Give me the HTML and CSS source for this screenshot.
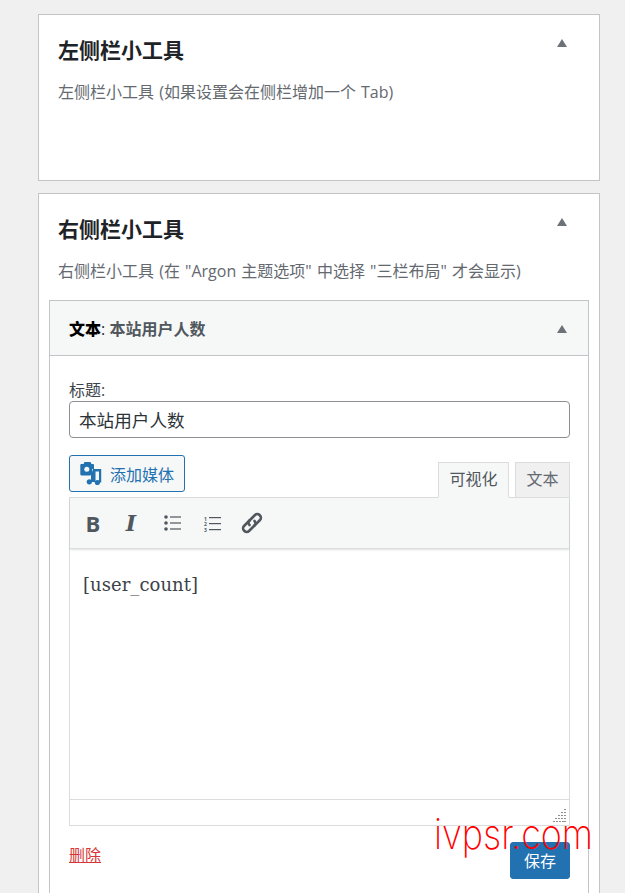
FILE: index.html
```html
<!DOCTYPE html>
<html lang="zh-CN">
<head>
<meta charset="utf-8">
<title>小工具</title>
<link rel="stylesheet" href="styles.css">
</head>
<body>
<main class="page">
  <section class="card card-left">
    <div class="card-head">
      <h2>左侧栏小工具</h2>
      <span class="arrow"></span>
    </div>
    <p class="desc">左侧栏小工具 (如果设置会在侧栏增加一个 Tab)</p>
  </section>

  <section class="card card-right">
    <div class="card-head">
      <h2>右侧栏小工具</h2>
      <span class="arrow"></span>
    </div>
    <p class="desc">右侧栏小工具 (在 "Argon 主题选项" 中选择 "三栏布局" 才会显示)</p>

    <div class="widget">
      <div class="widget-head">
        <h3><b>文本</b><i>:</i> <span>本站用户人数</span></h3>
        <span class="arrow arrow-widget"></span>
      </div>
      <div class="widget-body">
        <label class="field-label" for="t">标题:</label>
        <input class="field-input" id="t" type="text" value="本站用户人数">

        <div class="editor-top">
          <button class="media-btn" type="button">
            <svg class="media-icon" viewBox="0 0 22 23" width="22" height="23" aria-hidden="true">
              <path fill="#2271b1" d="M3.500 2L4.500 0h6l1 2h1.300c.7 0 1.200.5 1.200 1.200V7h-2v5.500L10 13.500H1.500C.8 13.500.3 13 .3 12.300V3.200C.3 2.500.8 2 1.500 2z"/>
              <circle cx="6.800" cy="7.300" r="2.500" fill="#f6f7f7"/>
              <path fill="#2271b1" d="M13 7h8.200V20.500h-2.200V9.500h-3.500V20H11V13z"/>
              <circle cx="9.300" cy="19.800" r="2.600" fill="#2271b1"/>
              <circle cx="17.400" cy="20.500" r="2.600" fill="#2271b1"/>
            </svg>
            <span>添加媒体</span>
          </button>
          <div class="tabs">
            <span class="tab tab-active">可视化</span>
            <span class="tab tab-text">文本</span>
          </div>
        </div>

        <div class="editor">
          <div class="toolbar">
            <span class="tool tool-b">B</span>
            <span class="tool tool-i">I</span>
            <svg viewBox="0 0 17 16" width="17" height="16" aria-hidden="true">
              <g fill="#50575e">
                <circle cx="2" cy="2" r="1.800"/><circle cx="2" cy="8" r="1.800"/><circle cx="2" cy="14" r="1.800"/>
                <rect x="6" y="1.400" width="11" height="1.200"/><rect x="6" y="7.400" width="11" height="1.200"/><rect x="6" y="13.400" width="11" height="1.200"/>
              </g>
            </svg>
            <svg viewBox="0 0 17 17" width="17" height="17" aria-hidden="true">
              <g fill="#50575e">
                <text x="0" y="5.500" class="num">1</text><text x="0" y="11" class="num">2</text><text x="0" y="16.500" class="num">3</text>
                <rect x="5" y="2" width="12" height="1.200"/><rect x="5" y="8" width="12" height="1.200"/><rect x="5" y="14" width="12" height="1.200"/>
              </g>
            </svg>
            <svg viewBox="0 0 22 22" width="22" height="22" aria-hidden="true">
              <g fill="none" stroke="#50575e" stroke-width="2.600" stroke-linecap="round">
                <path d="M8.500 8.500L3 14a3.200 3.200 0 0 0 0 4.500l.5.500a3.200 3.200 0 0 0 4.500 0l5.500-5.500a3.200 3.200 0 0 0 0-4.500"/>
                <path d="M13.500 13.500L19 8a3.200 3.200 0 0 0 0-4.500l-.5-.5a3.200 3.200 0 0 0-4.500 0L8.500 8.500a3.200 3.200 0 0 0 0 4.500"/>
              </g>
            </svg>
          </div>
          <div class="editor-content">[user_count]</div>
          <div class="statusbar">
            <svg class="grip" viewBox="0 0 13 13" width="13" height="13" aria-hidden="true">
              <g fill="#8c8f94">
                <rect x="11" y="0" width="2" height="1"/>
                <rect x="8" y="3" width="2" height="1"/><rect x="11" y="3" width="2" height="1"/>
                <rect x="8" y="6" width="2" height="1"/><rect x="11" y="6" width="2" height="1"/><rect x="5" y="6" width="2" height="1"/>
                <rect x="2" y="9" width="2" height="1"/><rect x="5" y="9" width="2" height="1"/><rect x="8" y="9" width="2" height="1"/><rect x="11" y="9" width="2" height="1"/>
                <rect x="0" y="12" width="2" height="1"/><rect x="3" y="12" width="2" height="1"/><rect x="6" y="12" width="2" height="1"/><rect x="9" y="12" width="2" height="1"/><rect x="11" y="12" width="2" height="1"/>
              </g>
            </svg>
          </div>
        </div>

        <div class="actions">
          <a class="delete" href="#">删除</a>
          <button class="save" type="button">保存</button>
        </div>
      </div>
    </div>
  </section>
</main>
<div class="watermark">ivpsr.com</div>
</body>
</html>
```
FILE: styles.css
```css
* { box-sizing: border-box; }
html, body { margin: 0; height: 893px; overflow: hidden; }
body {
  background: #f0f0f1;
  font-family: "Open Sans", "Noto Sans CJK SC", sans-serif;
  color: #50575e;
  position: relative;
}
.page { padding: 14px 25px 0 38px; display: flex; flex-direction: column; gap: 12px; }
.card { background: #fff; border: 1px solid #c3c4c7; padding: 0 10px; }
.card-left { height: 167px; }
.card-right { height: 800px; }
.card-head { display: flex; justify-content: space-between; align-items: center; height: 70px; padding: 0 22px 0 9px; }
h2 { margin: 0; font-size: 21px; font-weight: 700; color: #1d2327; line-height: 28px; }
.arrow { width: 0; height: 0; border-left: 5px solid transparent; border-right: 5px solid transparent; border-bottom: 8px solid #6c7278; margin-top: -14px; }
.arrow-widget { margin-top: -1px; }
.desc { margin: -5px 0 0 9px; font-size: 16px; line-height: 24px; color: #646970; word-spacing: 1px; }
.widget { margin-top: 17px; border: 1px solid #c3c4c7; background: #fff; height: 700px; }
.widget-head { display: flex; justify-content: space-between; align-items: center; height: 55px; padding: 2px 21px 0 19px; background: #f6f7f7; border-bottom: 1px solid #c3c4c7; }
h3 { margin: 0; font-size: 16px; font-weight: 700; line-height: 24px; color: #1d2327; }
h3 b { color: #000; }
h3 i { font-style: normal; font-weight: 400; color: #1d2327; }
h3 span { color: #50575e; }
.widget-body { padding: 23px 18px 0 19px; }
.field-label { display: block; font-size: 16px; line-height: 22px; color: #3c434a; }
.field-input { display: block; width: 100%; height: 37px; padding: 0 9px; border: 1px solid #8c8f94; border-radius: 4px; font: 17.6px/35px "Open Sans", "Noto Sans CJK SC", sans-serif; color: #2c3338; background: #fff; }
.editor-top { display: flex; justify-content: space-between; align-items: flex-end; margin-top: 17px; height: 43px; }
.media-btn { display: flex; align-items: center; gap: 8px; height: 37px; width: 116px; margin-bottom: 6px; padding: 0 0 0 10px; background: #f6f7f7; border: 1px solid #2271b1; border-radius: 3px; color: #2271b1; font: 16px "Open Sans", "Noto Sans CJK SC", sans-serif; }
.media-icon { flex: none; }
.tabs { display: flex; gap: 6px; position: relative; z-index: 1; }
.tab { width: 55px; height: 36px; text-align: center; border: 1px solid #dcdcde; background: #f0f0f1; font-size: 16px; line-height: 32px; color: #646970; }
.tab-active { width: 71px; background: #f6f7f7; border-bottom-color: #f6f7f7; color: #50575e; }
.editor { border: 1px solid #dcdcde; height: 329px; margin-top: -1px; display: flex; flex-direction: column; background: #fff; }
.toolbar { display: grid; grid-template-columns: 38px 38px 44px 37px 42px; justify-items: center; align-items: center; justify-content: start; height: 51px; flex: none; padding: 0 0 0 4px; background: #f6f7f7; border-bottom: 1px solid #dcdcde; box-shadow: 0 1px 2px rgba(0,0,0,.12); }
.tool { font: 700 22px/1 "Open Sans", sans-serif; color: #50575e; }
.tool-i { font: italic 700 22px/1 "DejaVu Serif", serif; }
.num { font: 700 5px "Open Sans", sans-serif; }
.editor-content { flex: 1; padding: 23px 13px; font: 18px/26px "DejaVu Serif", serif; letter-spacing: .05px; color: #3c434a; }
.statusbar { height: 26px; flex: none; border-top: 1px solid #dcdcde; display: flex; justify-content: flex-end; align-items: flex-end; padding: 0 3px 3px 0; }
.actions { display: flex; justify-content: space-between; align-items: flex-start; margin-top: 16px; }
.delete { font-size: 16px; line-height: 24px; margin-top: 1px; color: #d63638; text-decoration: underline; }
.save { width: 60px; height: 37px; padding: 0 0 2px; background: #2271b1; border: 1px solid #2271b1; border-radius: 3px; color: #fff; font: 16px "Open Sans", "Noto Sans CJK SC", sans-serif; }
.watermark { position: absolute; left: 434px; top: 804px; font: 200 42px/60px "Inter", sans-serif; color: #f00; transform: scaleX(.855); transform-origin: left center; pointer-events: none; white-space: nowrap; }
```
